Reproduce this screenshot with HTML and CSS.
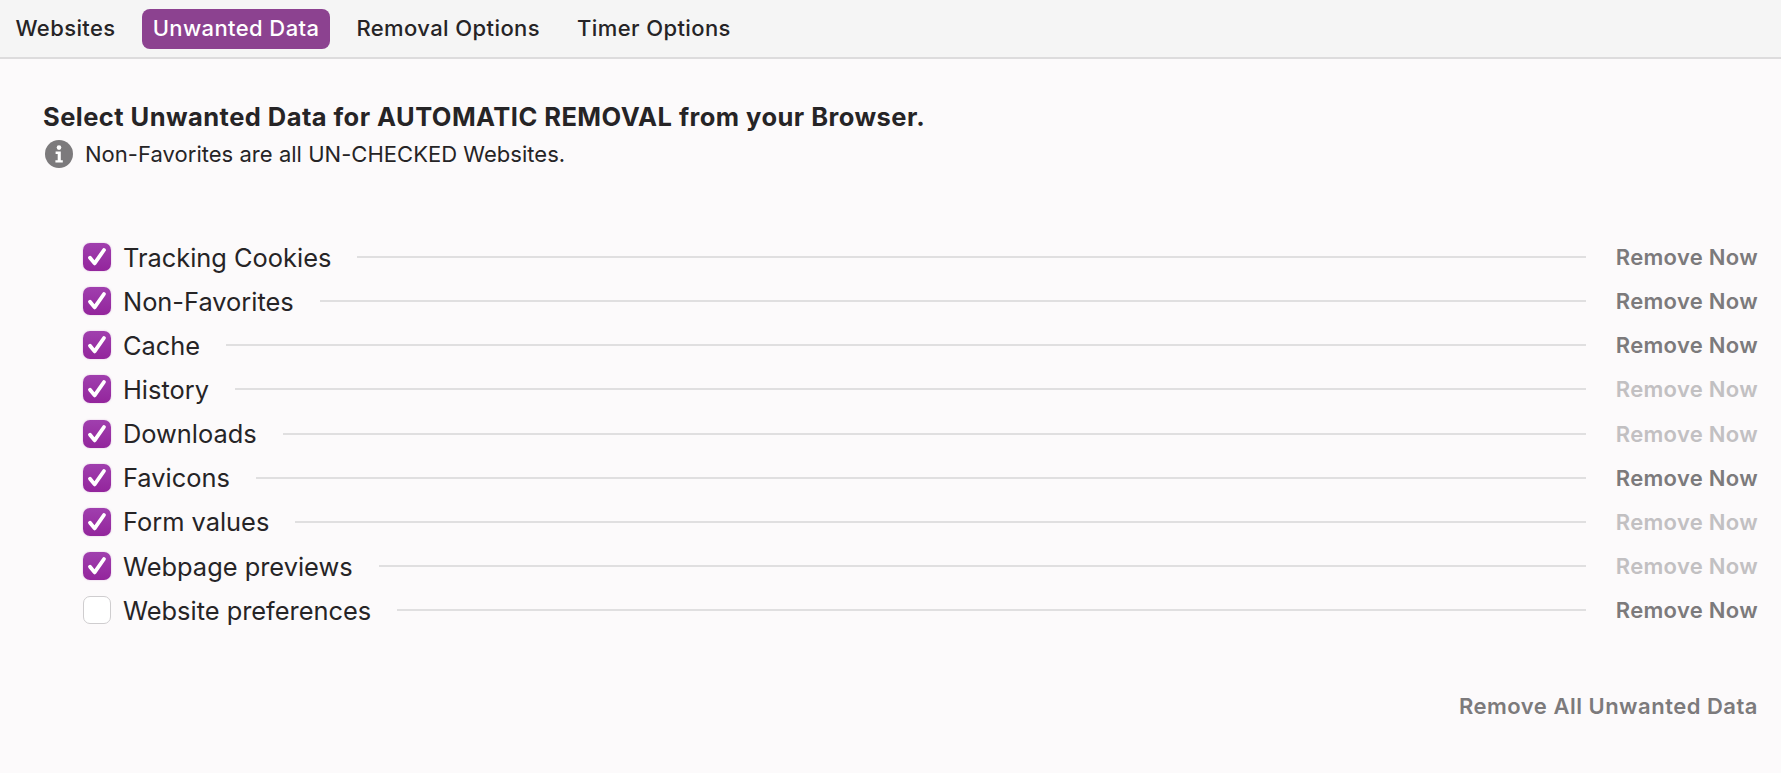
FILE: index.html
```html
<!DOCTYPE html>
<html lang="en">
<head>
  <meta charset="UTF-8">
  <title>Unwanted Data</title>
  <link rel="stylesheet" href="styles.css">
</head>
<body>
  <nav class="tabs">
    <div class="tab">Websites</div>
    <div class="tab active">Unwanted Data</div>
    <div class="tab">Removal Options</div>
    <div class="tab">Timer Options</div>
  </nav>

  <main class="content">
    <h1>Select Unwanted Data for AUTOMATIC REMOVAL from your Browser.</h1>
    <div class="note">
      <svg class="info" viewBox="0 0 28 28">
        <circle cx="14" cy="14" r="14" fill="#7c7a7c"/>
        <circle cx="14" cy="7.6" r="2.3" fill="#fff"/>
        <path d="M10.6 11.6h5.2v8.6h2v2.4H10.4v-2.4h2.3v-6.2h-2.1z" fill="#fff"/>
      </svg>
      <span>Non-Favorites are all UN-CHECKED Websites.</span>
    </div>

    <div class="list">
      <div class="row">
        <span class="box checked"><svg viewBox="0 0 28 28"><path d="M7 14.8l4.6 5.6L21 7"/></svg></span>
        <span class="label">Tracking Cookies</span>
        <span class="line"></span>
        <span class="remove">Remove Now</span>
      </div>
      <div class="row">
        <span class="box checked"><svg viewBox="0 0 28 28"><path d="M7 14.8l4.6 5.6L21 7"/></svg></span>
        <span class="label">Non-Favorites</span>
        <span class="line"></span>
        <span class="remove">Remove Now</span>
      </div>
      <div class="row">
        <span class="box checked"><svg viewBox="0 0 28 28"><path d="M7 14.8l4.6 5.6L21 7"/></svg></span>
        <span class="label">Cache</span>
        <span class="line"></span>
        <span class="remove">Remove Now</span>
      </div>
      <div class="row">
        <span class="box checked"><svg viewBox="0 0 28 28"><path d="M7 14.8l4.6 5.6L21 7"/></svg></span>
        <span class="label">History</span>
        <span class="line"></span>
        <span class="remove disabled">Remove Now</span>
      </div>
      <div class="row">
        <span class="box checked"><svg viewBox="0 0 28 28"><path d="M7 14.8l4.6 5.6L21 7"/></svg></span>
        <span class="label">Downloads</span>
        <span class="line"></span>
        <span class="remove disabled">Remove Now</span>
      </div>
      <div class="row">
        <span class="box checked"><svg viewBox="0 0 28 28"><path d="M7 14.8l4.6 5.6L21 7"/></svg></span>
        <span class="label">Favicons</span>
        <span class="line"></span>
        <span class="remove">Remove Now</span>
      </div>
      <div class="row">
        <span class="box checked"><svg viewBox="0 0 28 28"><path d="M7 14.8l4.6 5.6L21 7"/></svg></span>
        <span class="label">Form values</span>
        <span class="line"></span>
        <span class="remove disabled">Remove Now</span>
      </div>
      <div class="row">
        <span class="box checked"><svg viewBox="0 0 28 28"><path d="M7 14.8l4.6 5.6L21 7"/></svg></span>
        <span class="label">Webpage previews</span>
        <span class="line"></span>
        <span class="remove disabled">Remove Now</span>
      </div>
      <div class="row">
        <span class="box"></span>
        <span class="label">Website preferences</span>
        <span class="line"></span>
        <span class="remove">Remove Now</span>
      </div>
    </div>

    <div class="remove-all">Remove All Unwanted Data</div>
  </main>
</body>
</html>
```

FILE: styles.css
```css
html, body {
  height: 100%;
}

body {
  margin: 0;
  background-color: #fcfafb;
  font-family: Inter, 'Noto Sans', sans-serif;
  color: #262426;
  overflow: hidden;
}

.tabs {
  display: flex;
  align-items: center;
  gap: 15px;
  height: 59px;
  padding: 0 5px;
  box-sizing: border-box;
  background-color: #f5f5f5;
  border-bottom: 2px solid #dddcdd;
}

.tab {
  height: 40px;
  line-height: 39px;
  padding: 0 11px;
  border-radius: 8px;
  font-size: 22px;
  letter-spacing: 0.4px;
  font-weight: 500;
}

.tab:first-child {
  padding-left: 10.5px;
}

.tab.active {
  background-color: #8c4290;
  color: #fff;
}

.content {
  padding: 43px 23px 0 43px;
}

h1 {
  margin: 0;
  font-size: 25.5px;
  letter-spacing: 0.45px;
  line-height: 30px;
  font-weight: 700;
}

.note {
  display: flex;
  align-items: center;
  gap: 12px;
  margin-top: 7px;
  margin-left: 2px;
  font-size: 22px;
  letter-spacing: 0.03px;
  line-height: 30px;
}

.info {
  width: 28px;
  height: 28px;
}

.list {
  margin-top: 66px;
  padding-left: 40px;
}

.row {
  display: flex;
  align-items: center;
  height: 44.15px;
}

.box {
  width: 28px;
  height: 28px;
  box-sizing: border-box;
  border: 1px solid #cfcdcf;
  border-radius: 7px;
  background-color: #fff;
  flex-shrink: 0;
}

.box.checked {
  border: 0;
  background: linear-gradient(#a03fae, #93259c);
  box-shadow: 0 0 2px rgba(160, 60, 170, 0.35);
}

.box svg {
  display: block;
  width: 28px;
  height: 28px;
  fill: none;
  stroke: #fff;
  stroke-width: 3.8;
  stroke-linecap: round;
  stroke-linejoin: round;
}

.label {
  margin-left: 12px;
  font-size: 25.4px;
}

.line {
  flex: 1;
  height: 2px;
  margin: 0 30px 0 26px;
  background-color: #e0dfe0;
}

.remove {
  font-size: 22px;
  letter-spacing: 0.3px;
  font-weight: 600;
  color: #7c7a7c;
}

.remove.disabled {
  color: #c2c0c2;
}

.remove-all {
  margin-top: 60.5px;
  text-align: right;
  font-size: 22px;
  letter-spacing: 0.5px;
  font-weight: 600;
  color: #7c7a7c;
}
```
